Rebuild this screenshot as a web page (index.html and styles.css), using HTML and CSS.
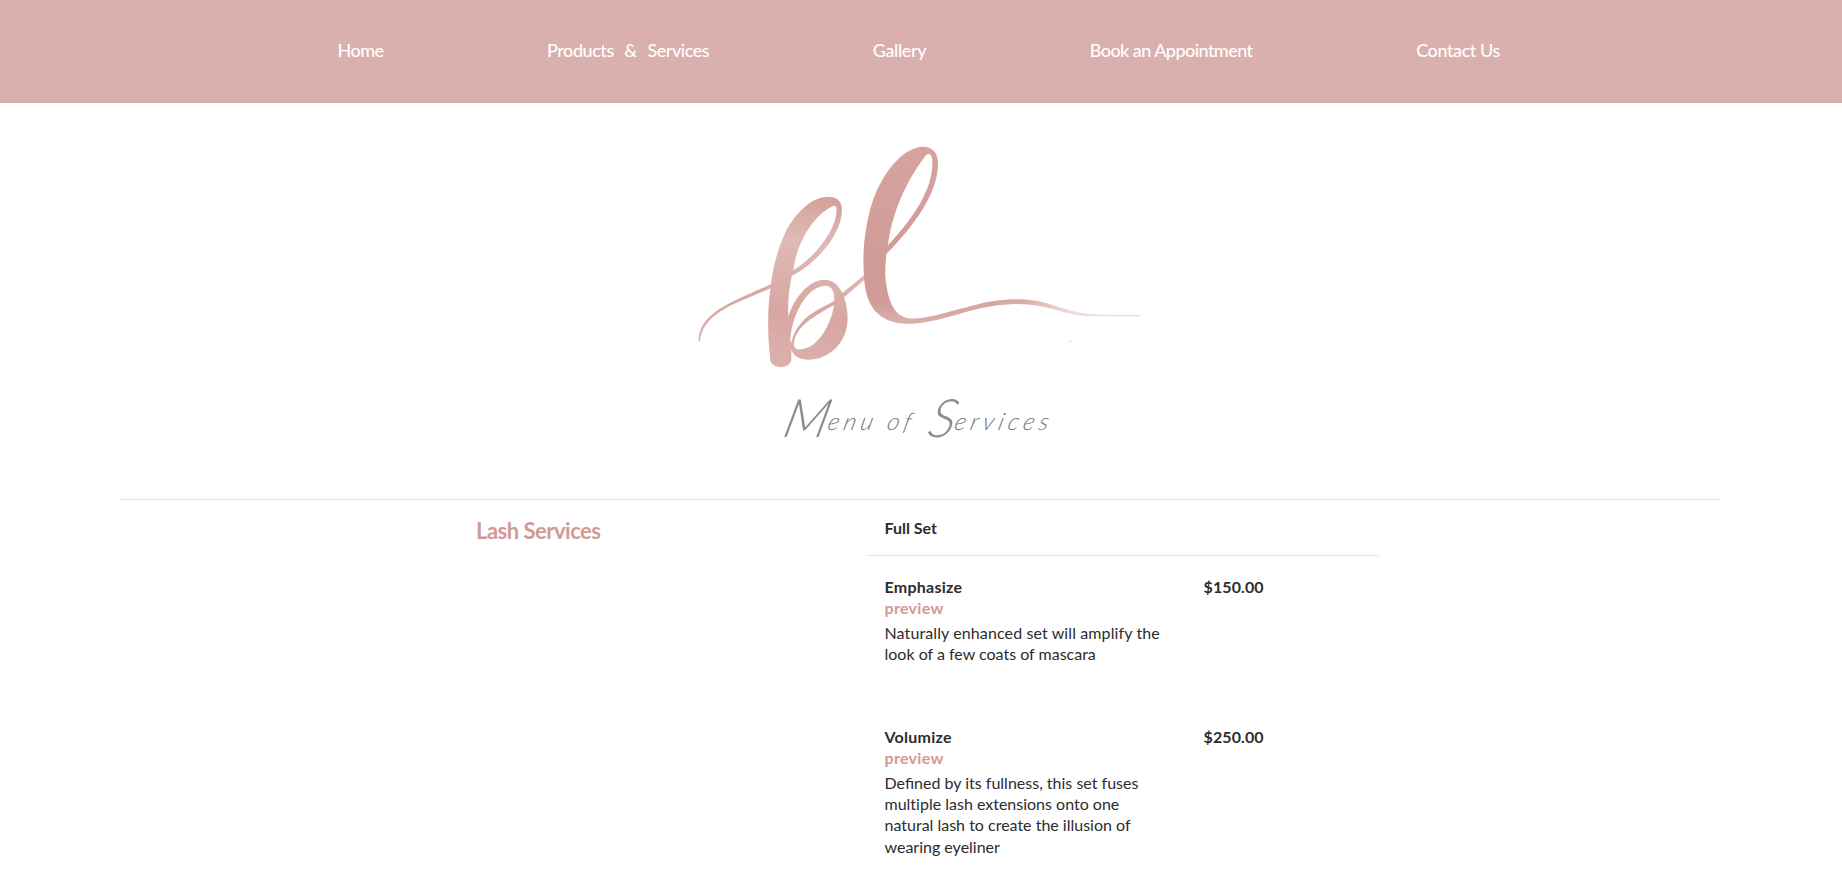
FILE: index.html
```html
<!DOCTYPE html>
<html lang="en">
<head>
<meta charset="utf-8">
<title>Menu of Services</title>
<link rel="stylesheet" href="styles.css">
</head>
<body>
<nav class="nav">
  <a class="nav-link">Home</a>
  <a class="nav-link nav-wide">Products &nbsp;&amp;&nbsp; Services</a>
  <a class="nav-link nav-loose">Gallery</a>
  <a class="nav-link">Book an Appointment</a>
  <a class="nav-link nav-loose">Contact Us</a>
</nav>
<header class="hero">
  <svg class="logo" viewBox="0 0 1440 720" aria-label="BL logo">
    <defs>
      <linearGradient id="rose" gradientUnits="userSpaceOnUse" x1="460" y1="220" x2="360" y2="690">
        <stop offset="0" stop-color="#d5a29d"/><stop offset=".27" stop-color="#dfbab5"/><stop offset=".5" stop-color="#dbb0ab"/><stop offset=".72" stop-color="#d7a7a2"/><stop offset="1" stop-color="#dbafab"/>
      </linearGradient>
      <linearGradient id="deep" gradientUnits="userSpaceOnUse" x1="0" y1="50" x2="0" y2="580">
        <stop offset="0" stop-color="#d6a49f"/><stop offset=".7" stop-color="#cf9b96"/><stop offset=".88" stop-color="#d09c97"/><stop offset="1" stop-color="#dbb0ac"/>
      </linearGradient>
      <linearGradient id="tail" gradientUnits="userSpaceOnUse" x1="680" y1="0" x2="1380" y2="0">
        <stop offset="0" stop-color="#d9ada9"/><stop offset=".35" stop-color="#d6a6a1"/><stop offset=".5" stop-color="#d9aca7"/><stop offset=".7" stop-color="#efdcd9"/><stop offset="1" stop-color="#ecd9d7"/>
      </linearGradient>
    </defs>
    <g fill="url(#rose)" fill-rule="evenodd">
      <path d="M56 633C55 580 96 546 160 514C200 494 240 478 276 461L274 474C235 490 195 508 160 523C100 553 66 582 60 634Z"/>
      <path d="M445 200C395 200 350 245 317 305C289 365 277 425 272 470C262 540 262 610 271 690C273 718 330 718 334 690L334 660C342 680 360 688 385 689C445 690 503 640 503 565C503 545 499 520 492 502L556 447V433L487 489C475 465 460 449 433 449C390 449 343 500 325 560C323 510 328 475 335 438C400 405 485 320 486 240C486 212 470 200 445 200ZM340 421C347 350 395 258 459 228C467 226 470 231 470 241C468 300 410 377 340 421ZM331 635C332 565 376 468 438 467C459 470 463 488 463 512C425 535 352 558 334 637ZM342 642C345 595 390 565 462 525C455 575 425 632 388 651C360 662 342 662 342 642Z"/>
    </g>
    <path fill="url(#tail)" d="M650 560C720 576 770 554 860 532C920 514 965 508 1010 508C1075 507 1110 523 1160 538C1200 551 1225 552 1250 554L1380 555V559L1240 559C1210 559 1180 555 1150 546C1110 535 1070 522 1010 522C960 522 905 533 860 545C800 562 740 581 680 581Z"/>
    <path fill="url(#deep)" fill-rule="evenodd" d="M730 50C670 50 600 130 570 240C550 320 548 380 552 440C556 520 590 580 680 581C715 580 727 573 725 567C650 574 630 530 620 470C612 430 617 400 619 372C700 290 775 190 774 100C774 65 755 50 730 50ZM624 346C635 250 680 150 738 76C749 67 757 73 757 100C757 180 700 265 624 346Z"/>
    <circle cx="1171" cy="634" r="1.7" fill="#999"/>
  </svg>
  <h1 class="title"><span class="word w-menu">Menu</span><span class="w-of">of</span><span class="word w-serv">Services</span></h1>
</header>
<main class="menu">
  <h2 class="category">Lash Services</h2>
  <section class="list">
    <h3 class="group">Full Set</h3>
    <article class="item">
      <div class="info"><h4 class="name">Emphasize</h4><a class="preview">preview</a>
        <p class="desc desc-short">Naturally enhanced set will amplify the look of a few coats of mascara</p></div>
      <span class="price">$150.00</span>
    </article>
    <article class="item">
      <div class="info"><h4 class="name">Volumize</h4><a class="preview">preview</a>
        <p class="desc">Defined by its fullness, this set fuses mult&zwnj;iple lash extensions onto one natural lash to create the illusion of wearing eyeliner</p></div>
      <span class="price">$250.00</span>
    </article>
  </section>
</main>
</body>
</html>
```
FILE: styles.css
```css
* { box-sizing: border-box; margin: 0; }
body { background: #fff; color: #2c2c2e; font: 16px/21.33px Lato, sans-serif; overflow: hidden; }
.nav { height: 103px; background: #d9b0ad; border-bottom: 1px solid #d6a6a1; display: flex; justify-content: space-between; padding: 38.5px 342px 0 337.5px; color: #fff; font-size: 18px; line-height: 22px; letter-spacing: -.55px; font-weight: 500; white-space: nowrap; }
.nav-wide { letter-spacing: -.45px; word-spacing: 1.2px; }
.nav-loose { letter-spacing: -.4px; }
.hero { height: 396px; padding: 27px 0 0 680px; }
.logo { display: block; width: 480px; height: 240px; }
.title { display: flex; height: 60px; margin: 21px 0 0 105px; font-family: "Segoe Script", "Brush Script MT", Lato, sans-serif; font-size: 24px; font-weight: 300; font-style: italic; line-height: 60px; letter-spacing: 4.5px; color: #777; transform: skewX(-14deg); }
.word { display: block; }
.word::first-letter { font-size: 53px; font-weight: 300; line-height: 0; letter-spacing: -1px; vertical-align: -7px; color: #8c8c8c; }
.w-menu { width: 103px; }
.w-of { width: 42px; }
.menu { width: 1601px; margin-left: 119px; border-top: 1px solid #e3e3e3; display: grid; grid-template-columns: 749px 511px; }
.category { padding: 18px 0 0 357px; color: #cf9b96; font-size: 22px; line-height: 26px; letter-spacing: -.5px; }
.group { height: 56px; padding: 17px 0 0 16.5px; border-bottom: 1px solid #e3e3e3; font-size: 16px; font-weight: 700; }
.item { display: grid; grid-template-columns: 319px 1fr; height: 150px; padding-left: 16.5px; }
.group + .item { margin-top: 20px; }
.info { width: 285px; }
.name { font-size: 16px; letter-spacing: .25px; }
.preview { display: block; color: #cf9b96; font-weight: 700; letter-spacing: .3px; }
.desc { margin-top: 3px; }
.desc-short::first-line { letter-spacing: .11px; }
.price { font-weight: 700; letter-spacing: .1px; }
```
